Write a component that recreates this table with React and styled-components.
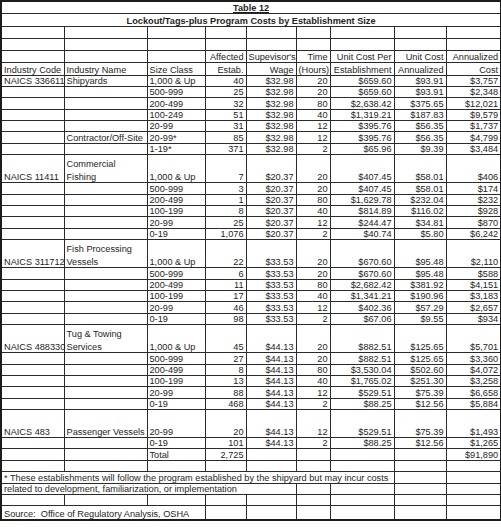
import React, { Fragment } from 'react';
import styled, { createGlobalStyle } from 'styled-components';

const groups = [
    {
        code: 'NAICS 336611',
        name: ['Shipyards'],
        rows: [
            ['1,000 & Up', '40', '$32.98', '20', '$659.60', '$93.91', '$3,757'],
            ['500-999', '25', '$32.98', '20', '$659.60', '$93.91', '$2,348'],
            ['200-499', '32', '$32.98', '80', '$2,638.42', '$375.65', '$12,021'],
            ['100-249', '51', '$32.98', '40', '$1,319.21', '$187.83', '$9,579'],
            ['20-99', '31', '$32.98', '12', '$395.76', '$56.35', '$1,737'],
        ],
    },
    {
        code: '',
        name: ['Contractor/Off-Site'],
        rows: [
            ['20-99*', '85', '$32.98', '12', '$395.76', '$56.35', '$4,799'],
            ['1-19*', '371', '$32.98', '2', '$65.96', '$9.39', '$3,484'],
        ],
    },
    {
        code: 'NAICS 11411',
        name: ['Commercial', 'Fishing'],
        tall: true,
        rows: [
            ['1,000 & Up', '7', '$20.37', '20', '$407.45', '$58.01', '$406'],
            ['500-999', '3', '$20.37', '20', '$407.45', '$58.01', '$174'],
            ['200-499', '1', '$20.37', '80', '$1,629.78', '$232.04', '$232'],
            ['100-199', '8', '$20.37', '40', '$814.89', '$116.02', '$928'],
            ['20-99', '25', '$20.37', '12', '$244.47', '$34.81', '$870'],
            ['0-19', '1,076', '$20.37', '2', '$40.74', '$5.80', '$6,242'],
        ],
    },
    {
        code: 'NAICS 311712',
        name: ['Fish Processing', 'Vessels'],
        tall: true,
        rows: [
            ['1,000 & Up', '22', '$33.53', '20', '$670.60', '$95.48', '$2,110'],
            ['500-999', '6', '$33.53', '20', '$670.60', '$95.48', '$588'],
            ['200-499', '11', '$33.53', '80', '$2,682.42', '$381.92', '$4,151'],
            ['100-199', '17', '$33.53', '40', '$1,341.21', '$190.96', '$3,183'],
            ['20-99', '46', '$33.53', '12', '$402.36', '$57.29', '$2,657'],
            ['0-19', '98', '$33.53', '2', '$67.06', '$9.55', '$934'],
        ],
    },
    {
        code: 'NAICS 488330',
        name: ['Tug & Towing', 'Services'],
        tall: true,
        rows: [
            ['1,000 & Up', '45', '$44.13', '20', '$882.51', '$125.65', '$5,701'],
            ['500-999', '27', '$44.13', '20', '$882.51', '$125.65', '$3,360'],
            ['200-499', '8', '$44.13', '80', '$3,530.04', '$502.60', '$4,072'],
            ['100-199', '13', '$44.13', '40', '$1,765.02', '$251.30', '$3,258'],
            ['20-99', '88', '$44.13', '12', '$529.51', '$75.39', '$6,658'],
            ['0-19', '468', '$44.13', '2', '$88.25', '$12.56', '$5,884'],
        ],
    },
    {
        code: 'NAICS 483',
        name: ['Passenger Vessels'],
        tall: true,
        rows: [
            ['20-99', '20', '$44.13', '12', '$529.51', '$75.39', '$1,493'],
            ['0-19', '101', '$44.13', '2', '$88.25', '$12.56', '$1,265'],
        ],
    },
];

const widths = [63, 83, 58, 41, 50, 34, 64, 52, 55];

const Blanks = ({n}) => Array.from({length: n}, (_, i) => <Cell key={i} />);

const App = () => {
    return (
        <Fragment>
            <GlobalStyle />
            <Sheet>
                <colgroup>
                    {widths.map((w, i) => <col key={i} style={{width: w}} />)}
                </colgroup>
                <tbody>
                    <Row $h={12}>
                        <Title colSpan={9} $underline>Table 12</Title>
                    </Row>
                    <Row $h={13}>
                        <Title colSpan={9}>Lockout/Tags-plus Program Costs by Establishment Size</Title>
                    </Row>
                    <Row $h={12}><Blanks n={9} /></Row>
                    <Row $h={12}><Blanks n={9} /></Row>
                    <Row $h={12}>
                        <Blanks n={3} />
                        <Cell $right>Affected</Cell>
                        <Cell $right>Supevisor's</Cell>
                        <Cell $right>Time</Cell>
                        <Cell $right>Unit Cost Per</Cell>
                        <Cell $right>Unit Cost</Cell>
                        <Cell $right>Annualized</Cell>
                    </Row>
                    <Row $h={13}>
                        <Cell>Industry Code</Cell>
                        <Cell>Industry Name</Cell>
                        <Cell>Size Class</Cell>
                        <Cell $right>Estab.</Cell>
                        <Cell $right>Wage</Cell>
                        <Cell $right>(Hours)</Cell>
                        <Cell $right>Establishment</Cell>
                        <Cell $right>Annualized</Cell>
                        <Cell $right>Cost</Cell>
                    </Row>

                    {groups.map((g) => g.rows.map((r, i) => (
                        <Row key={g.name[0] + r[0]} $h={i === 0 && g.tall ? 28 : 11.4}>
                            <Cell>{i === 0 ? g.code : ''}</Cell>
                            <Cell>
                                {i === 0 && g.name.map((line, k) => <NameLine key={k}>{line}</NameLine>)}
                            </Cell>
                            <Cell>{r[0]}</Cell>
                            {r.slice(1).map((v, k) => <Cell key={k} $right>{v}</Cell>)}
                        </Row>
                    )))}

                    <Row $h={11.4}>
                        <Blanks n={2} />
                        <Cell>Total</Cell>
                        <Cell $right>2,725</Cell>
                        <Blanks n={4} />
                        <Cell $right>$91,890</Cell>
                    </Row>
                    <Row $h={11.4}><Blanks n={9} /></Row>
                    <Row $h={11.4}>
                        <Cell colSpan={7}>* These establishments will follow the program established by the shipyard but may incur costs</Cell>
                        <Blanks n={2} />
                    </Row>
                    <Row $h={11.4}>
                        <Cell colSpan={5}>related to development, familiarization, or implementation</Cell>
                        <Blanks n={4} />
                    </Row>
                    <Row $h={11.4}><Blanks n={9} /></Row>
                    <Row $h={14}>
                        <Cell colSpan={3}>Source:&nbsp; Office of Regulatory Analysis, OSHA</Cell>
                        <Blanks n={6} />
                    </Row>
                </tbody>
            </Sheet>
        </Fragment>
    );
};

const GlobalStyle = createGlobalStyle`
    body{
        margin: 0;
        background: #fff;
        font-family: "Liberation Sans", Arial, sans-serif;
    }
`;

const Sheet = styled.table`
    width: 500px;
    table-layout: fixed;
    border-collapse: collapse;
    border: 2px solid #1c1c1c;
    font-size: 9.2px;
    color: #1e1e1e;
`;

const Row = styled.tr`
    height: ${({$h}) => $h}px;
`;

const Cell = styled.td`
    border: 1px solid #2b2b2b;
    padding: 0 2px;
    line-height: 9px;
    vertical-align: bottom;
    white-space: nowrap;
    overflow: visible;
    text-align: ${({$right}) => ($right ? 'right' : 'left')};
`;

const Title = styled.td`
    border: 1px solid #2b2b2b;
    padding: 0;
    line-height: 10px;
    text-align: center;
    vertical-align: bottom;
    font-weight: bold;
    text-decoration: ${({$underline}) => ($underline ? 'underline' : 'none')};
`;

const NameLine = styled.div`
    line-height: 10px;
    & + &{
        margin-top: 3px;
    }
`;

export default App
